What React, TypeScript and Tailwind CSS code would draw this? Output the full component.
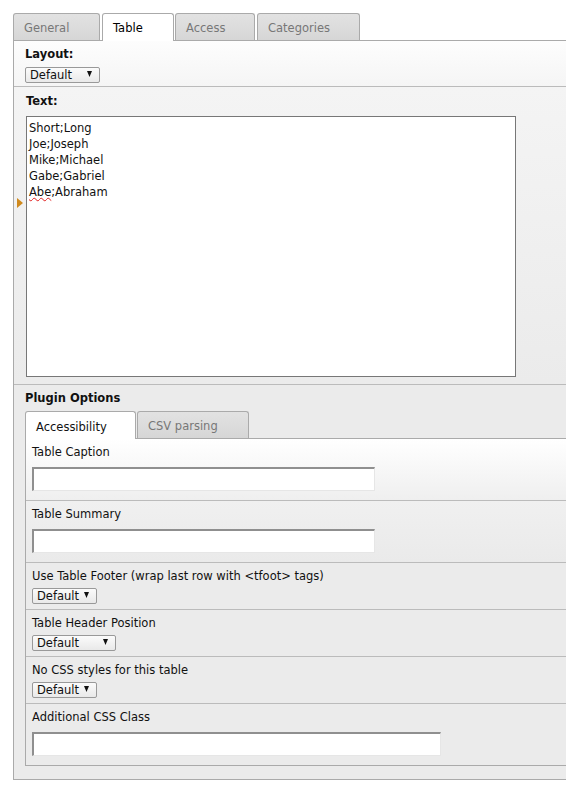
import React from 'react';

const inactiveTab =
  'flex h-[27px] items-center rounded-t-[3px] border border-b-0 border-[#aaa] bg-linear-to-b from-[#e2e2e2] to-[#d6d6d6] pl-[10px] pt-[2px] text-[#777]';
const activeTab =
  'relative z-10 -mb-px flex h-[28px] items-center rounded-t-[3px] border border-b-0 border-[#aaa] bg-white pl-[10px] pt-px text-black';

function Select({ width }: { width: string }) {
  return (
    <div
      className={`flex h-[16px] items-center justify-between rounded-[2px] border border-[#999] bg-linear-to-b from-[#fbfbfb] to-[#e9e9e9] pl-[4px] pr-[7px] pt-px leading-none ${width}`}
    >
      <span>Default</span>
      <svg width="5" height="6" viewBox="0 0 5 6" className="mb-[3px]">
        <path d="M0 0 L5 0 L2.5 6 Z" fill="#111" />
      </svg>
    </div>
  );
}

function TextInput({ width }: { width: string }) {
  return (
    <div
      className={`h-[24px] border-t-2 border-l-2 border-r border-b border-t-[#8f8f8f] border-l-[#8f8f8f] border-r-[#e6e6e6] border-b-[#e6e6e6] bg-white ${width}`}
    />
  );
}

const rows = ['Short;Long', 'Joe;Joseph', 'Mike;Michael', 'Gabe;Gabriel'];

export default function App() {
  return (
    <div className="min-h-[792px] w-[566px] overflow-hidden bg-white pl-[13px] pt-[13px] font-['DejaVu_Sans','Liberation_Sans',sans-serif] text-[11.5px] leading-[13px] text-[#111]">
      {/* main tabs */}
      <div className="flex h-[27px] items-end">
        <div className={`${inactiveTab} mr-[2px] w-[87px]`}>General</div>
        <div className={`${activeTab} mr-px w-[72px]`}>Table</div>
        <div className={`${inactiveTab} mr-[2px] w-[80px]`}>Access</div>
        <div className={`${inactiveTab} w-[103px]`}>Categories</div>
      </div>

      <div className="w-[560px] border-t border-l border-b border-[#aaa]">
        {/* Layout */}
        <div className="border-b border-[#bbb] bg-linear-to-b from-[#fdfdfd] to-[#f5f5f5] pl-[11px] pt-[7px] pb-[3px]">
          <div className="font-bold">Layout:</div>
          <div className="mt-[6px]">
            <Select width="w-[75px]" />
          </div>
        </div>

        {/* Text */}
        <div className="relative border-b border-[#bbb] bg-linear-to-b from-[#f4f4f4] to-[#ebebeb] pl-[12px] pt-[8px] pb-[7px]">
          <div className="font-bold">Text:</div>
          <div className="mt-[8px] h-[261px] w-[490px] border border-[#777] bg-white pl-[2px] pt-[3px] leading-[16px]">
            {rows.map((r) => (
              <div key={r}>{r}</div>
            ))}
            <div>
              <span className="underline decoration-[#e02020] decoration-wavy decoration-1 underline-offset-[1px]">Abe</span>
              ;Abraham
            </div>
          </div>
          <svg className="absolute left-[3px] top-[111px]" width="7" height="10" viewBox="0 0 7 10">
            <path d="M0 0 L6 5 L0 10 Z" fill="#d08a1e" />
          </svg>
        </div>

        {/* Plugin options */}
        <div className="bg-[#ebebeb] pl-[11px] pt-[7px] pb-[13px]">
          <div className="font-bold">Plugin Options</div>
          <div className="mt-[6px] flex h-[27px] items-end">
            <div className="relative z-10 -mb-px mr-px flex h-[28px] w-[111px] items-center rounded-t-[3px] border border-b-0 border-[#aaa] bg-white pl-[10px] pt-[3px]">
              Accessibility
            </div>
            <div className="flex h-[27px] w-[112px] items-center rounded-t-[3px] border border-b-0 border-[#aaa] bg-linear-to-b from-[#e2e2e2] to-[#d6d6d6] pl-[10px] pt-[3px] text-[#777]">
              CSV parsing
            </div>
          </div>

          <div className="border-t border-l border-b border-[#aaa]">
            <div className="border-b border-[#bbb] bg-linear-to-b from-white to-[#efefef] pl-[6px] pt-[7px] pb-[9px]">
              <div>Table Caption</div>
              <div className="mt-[8px]">
                <TextInput width="w-[343px]" />
              </div>
            </div>
            <div className="border-b border-[#bbb] bg-linear-to-b from-[#f0f0f0] to-[#eaeaea] pl-[6px] pt-[7px] pb-[9px]">
              <div>Table Summary</div>
              <div className="mt-[8px]">
                <TextInput width="w-[343px]" />
              </div>
            </div>
            <div className="border-b border-[#bbb] bg-[#ebebeb] pl-[6px] pt-[7px] pb-[5px]">
              <div>Use Table Footer (wrap last row with &lt;tfoot&gt; tags)</div>
              <div className="mt-[5px]">
                <Select width="w-[65px]" />
              </div>
            </div>
            <div className="border-b border-[#bbb] bg-[#ebebeb] pl-[6px] pt-[7px] pb-[5px]">
              <div>Table Header Position</div>
              <div className="mt-[5px]">
                <Select width="w-[84px]" />
              </div>
            </div>
            <div className="border-b border-[#bbb] bg-[#ebebeb] pl-[6px] pt-[7px] pb-[5px]">
              <div>No CSS styles for this table</div>
              <div className="mt-[5px]">
                <Select width="w-[65px]" />
              </div>
            </div>
            <div className="bg-[#ebebeb] pl-[6px] pt-[7px] pb-[9px]">
              <div>Additional CSS Class</div>
              <div className="mt-[8px]">
                <TextInput width="w-[409px]" />
              </div>
            </div>
          </div>
        </div>
      </div>
    </div>
  );
}
